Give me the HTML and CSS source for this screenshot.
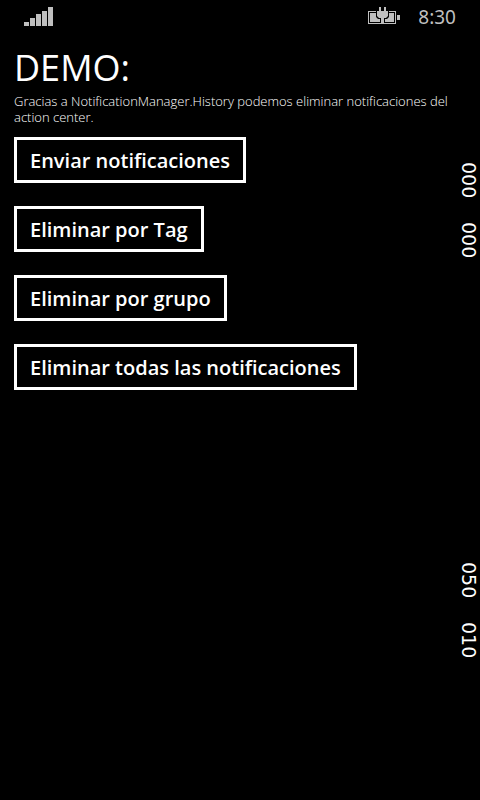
FILE: index.html
```html
<!DOCTYPE html>
<html lang="es">
<head>
<meta charset="utf-8">
<meta name="viewport" content="width=device-width, initial-scale=1">
<title>DEMO</title>
<link rel="stylesheet" href="styles.css">
</head>
<body>
<header class="status">
  <svg class="signal" width="29" height="19" viewBox="0 0 29 19" fill="currentColor" aria-hidden="true">
    <path d="M0 15h5v4H0zM6 11h5v8H6zM12 7h5v12h-5zM18 4h5v15h-5zM24 0h5v19h-5z"/>
  </svg>
  <svg class="battery" width="32" height="18" viewBox="0 0 32 18" fill="currentColor" aria-hidden="true">
    <path d="M0 4h8v1H1v11h12v1H0zM21 4h7v13H16v-1h11V5h-6zM29 8h3v5h-3z"/>
    <path d="M2 6h6v4l2 2h2v3H2zM21 6h5v9h-9v-3h2l2-2z"/>
    <path d="M11 0h2v4h3V0h2v4h2v5l-2 2h-2v6h-3v-6h-2l-2-2V4h2z"/>
  </svg>
  <time class="clock">8:30</time>
</header>
<main class="page">
  <h1 class="title">DEMO:</h1>
  <p class="intro">Gracias a NotificationManager.History podemos eliminar notificaciones del action center.</p>
  <div class="actions">
    <button class="action" type="button">Enviar notificaciones</button>
    <button class="action" type="button">Eliminar por Tag</button>
    <button class="action" type="button">Eliminar por grupo</button>
    <button class="action" type="button">Eliminar todas las notificaciones</button>
  </div>
</main>
<aside class="counters">
  <div class="group"><span>000</span><span>000</span></div>
  <div class="group"><span>050</span><span>010</span></div>
</aside>
</body>
</html>
```
FILE: styles.css
```css
* {
  box-sizing: border-box;
}

body {
  margin: 0;
  min-height: 100vh;
  position: relative;
  background: #000;
  color: #fff;
  font-family: "Open Sans", "Noto Sans", sans-serif;
}

.status {
  display: flex;
  align-items: center;
  height: 32px;
  padding: 0 24px;
  color: #bfbfbf;
}

.battery {
  margin-left: auto;
  margin-right: 18px;
}

.clock {
  font-family: "Noto Sans", sans-serif;
  font-size: 19px;
  line-height: 24px;
  padding-top: 2px;
}

.page {
  padding: 11px 24px 24px 14px;
}

.title {
  margin: 0;
  font-size: 36px;
  font-weight: 400;
  line-height: 50px;
}

.intro {
  margin: 0;
  font-size: 13px;
  font-weight: 300;
  line-height: 16px;
}

.actions {
  display: flex;
  flex-direction: column;
  align-items: flex-start;
  gap: 23px;
  margin-top: 12px;
}

.action {
  height: 46px;
  padding: 2px 13px 0;
  border: 3px solid #fff;
  background: transparent;
  color: inherit;
  font: inherit;
  font-size: 20px;
  font-weight: 600;
  line-height: 38px;
}

/* Frame-rate counters laid over the right edge of the page */
.counters {
  position: absolute;
  top: 162px;
  right: 0;
  display: flex;
  flex-direction: column;
  gap: 300px;
  font-family: "DejaVu Sans", sans-serif;
  font-size: 19px;
  line-height: 23px;
}

.group {
  display: flex;
  flex-direction: column;
  gap: 20px;
}

.group span {
  height: 40px;
  writing-mode: vertical-rl;
}
```
